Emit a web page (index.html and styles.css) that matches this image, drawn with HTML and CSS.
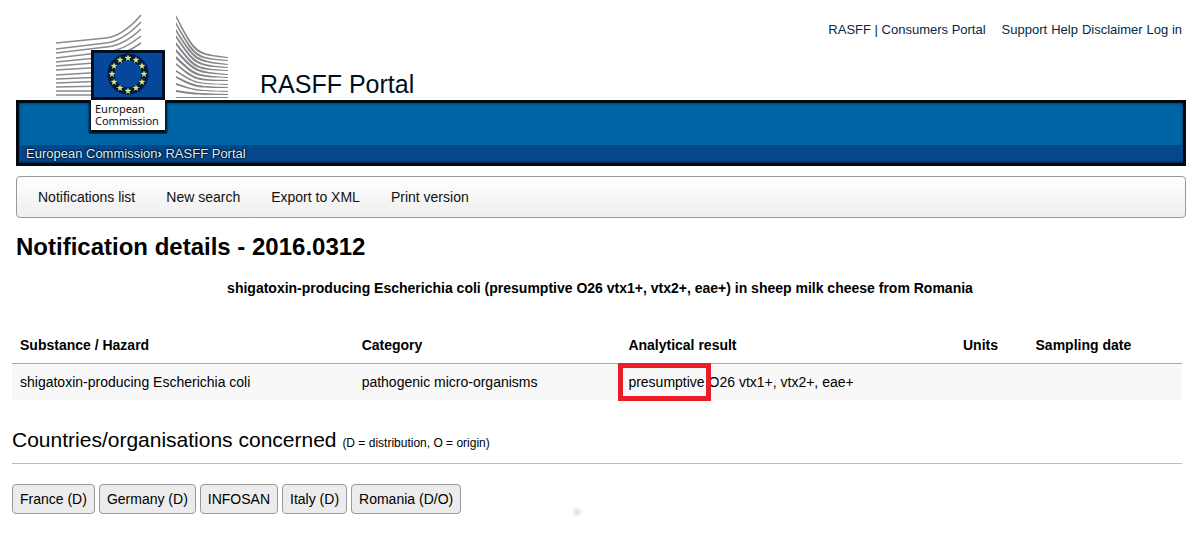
FILE: index.html
```html
<!DOCTYPE html>
<html lang="en">

<head>
  <meta charset="UTF-8">
  <meta name="viewport" content="width=device-width, initial-scale=1.0">
  <title>RASFF Portal</title>
  <link rel="stylesheet" href="styles.css">
</head>

<body>
  <header class="header">
    <div class="top">
      <div class="site-name">RASFF Portal</div>
      <div class="links">
        <div><a href="#">RASFF</a> | <a href="#">Consumers Portal</a></div>
        <div class="tools">
          <a href="#">Support</a>
          <a href="#">Help</a>
          <a href="#">Disclaimer</a>
          <a href="#">Log in</a>
        </div>
      </div>
    </div>
    <div class="banner">
      <div class="crumbs"><a href="#">European Commission</a><span class="arrow">›</span> <a href="#">RASFF Portal</a></div>
    </div>
    <!-- logo hangs over the banner -->
    <div class="logo">
      <svg class="logo-pic" viewBox="0 0 172 86" width="172" height="86" aria-hidden="true">
        <g fill="none" stroke="#8b8b8f" stroke-width="1.6">
          <path d="M0 29L50 24Q67 22 85 1" />
          <path d="M0 35L50 29Q67 27 85 8" />
          <path d="M0 39L50 33Q67 32 85 15" />
          <path d="M0 44L50 38Q67 37 85 22" />
          <path d="M0 48L50 43Q67 42 85 29" />
          <path d="M0 52L50 48" />
          <path d="M0 56L50 53" />
          <path d="M0 61L50 58" />
          <path d="M0 65L50 63" />
          <path d="M0 69L50 67" />
          <path d="M0 73L50 72" />
          <path d="M0 77L50 77" />
          <path d="M0 81L50 81" />
        </g>
        <g fill="#85858a">
          <path d="M120 1C140 39 140 39 172 43V44C139 41 139 41 120 4Z" />
          <path d="M120 8C140 43 140 43 172 46V47C139 45 139 45 120 11Z" />
          <path d="M120 15C140 46 140 46 172 50V51C139 48 139 48 120 18Z" />
          <path d="M120 21C140 50 140 50 172 53V54C139 52 139 52 120 24Z" />
          <path d="M120 28C140 54 140 54 172 56V57C139 56 139 56 120 31Z" />
          <path d="M120 35C140 57 140 57 172 60V61C139 59 139 59 120 38Z" />
          <path d="M120 42C140 61 140 61 172 63V64C139 63 139 63 120 45Z" />
          <path d="M120 49C140 65 140 65 172 66V67C139 67 139 67 120 51Z" />
          <path d="M120 56C140 69 140 69 172 70V71C139 70 139 70 120 58Z" />
          <path d="M120 62C140 72 140 72 172 73V74C139 74 139 74 120 64Z" />
          <path d="M120 69C140 76 140 76 172 77V78C139 77 139 77 120 71Z" />
          <path d="M120 76C140 79 140 79 172 80V81C139 81 139 81 120 78Z" />
          <path d="M120 83H172V84H120Z" />
        </g>
        <rect x="35" y="36" width="74" height="50" fill="#00101f" />
        <rect x="38" y="39" width="68" height="44" fill="#06479b" />
        <circle cx="72" cy="60" r="17" fill="none" stroke="#041c3c" stroke-width="7" />
        <defs>
          <path id="star" d="M0 -3.6L.9 -1.2L3.5 -1.1L1.4 .5L2.1 3L0 1.5L-2.1 3L-1.4 .5L-3.5 -1.1L-.9 -1.2Z" />
        </defs>
        <g fill="#dbea70">
          <use href="#star" x="72" y="44" />
          <use href="#star" x="80" y="46" />
          <use href="#star" x="86" y="52" />
          <use href="#star" x="88" y="60" />
          <use href="#star" x="86" y="68" />
          <use href="#star" x="80" y="74" />
          <use href="#star" x="72" y="77" />
          <use href="#star" x="64" y="74" />
          <use href="#star" x="58" y="68" />
          <use href="#star" x="56" y="60" />
          <use href="#star" x="58" y="52" />
          <use href="#star" x="64" y="46" />
        </g>
      </svg>
      <div class="logo-name"><div>European</div><div>Commission</div></div>
    </div>
  </header>

  <nav class="menu">
    <a href="#">Notifications list</a>
    <a href="#">New search</a>
    <a href="#">Export to XML</a>
    <a href="#">Print version</a>
  </nav>

  <main class="main">
    <h1>Notification details - 2016.0312</h1>
    <p class="subject">shigatoxin-producing Escherichia coli (presumptive O26 vtx1+, vtx2+, eae+) in sheep milk cheese from Romania</p>

    <table class="results">
      <thead>
        <tr>
          <th class="c-hazard">Substance / Hazard</th>
          <th class="c-cat">Category</th>
          <th class="c-result">Analytical result</th>
          <th class="c-units">Units</th>
          <th>Sampling date</th>
        </tr>
      </thead>
      <tbody>
        <tr>
          <td>shigatoxin-producing Escherichia coli</td>
          <td>pathogenic micro-organisms</td>
          <td><span class="marked">presumptive</span> O26 vtx1+, vtx2+, eae+</td>
          <td></td>
          <td></td>
        </tr>
      </tbody>
    </table>

    <h2>Countries/organisations concerned <small>(D = distribution, O = origin)</small></h2>
    <div class="countries">
      <button type="button">France (D)</button>
      <button type="button">Germany (D)</button>
      <button type="button">INFOSAN</button>
      <button type="button">Italy (D)</button>
      <button type="button">Romania (D/O)</button>
      <span class="dot"></span>
    </div>
  </main>
</body>

</html>
```

FILE: styles.css
```css
body {
  margin: 0;
  background-color: #fff;
  color: #000;
  font-family: "Liberation Sans", Arial, sans-serif;
  font-size: 14px;
  line-height: 16px;
}

a {
  color: inherit;
  text-decoration: none;
}

.header {
  position: relative;
  margin: 0 7px 0 16px;
}

.top {
  display: flex;
  justify-content: space-between;
  align-items: flex-start;
  padding: 22px 4px 0 244px;
}

.site-name {
  padding-top: 46px;
  font-size: 25px;
  line-height: 32px;
  color: #000f1c;
}

.links {
  display: flex;
  gap: 16px;
  font-size: 13px;
  color: #002a4a;
}

.tools {
  display: flex;
  gap: 4px;
}

.banner {
  border: 3px solid #000a14;
  padding-top: 42px;
  background-color: #0065a4;
  box-shadow: inset 0 0 3px #00203c;
}

.crumbs {
  padding: 1px 7px;
  background-color: #06468a;
  box-shadow: inset 0 -2px 2px -1px #00203c;
  color: #d2f3ff;
  font-size: 13px;
  text-shadow: 0 0 2px #000, 0 0 2px #000;
}

.crumbs .arrow {
  font-weight: bold;
}

.logo {
  position: absolute;
  top: 14px;
  left: 40px;
}

.logo-pic {
  display: block;
}

.logo-name {
  width: 70px;
  margin-left: 35px;
  padding: 3px 0 3px 4px;
  background-color: #fff;
  box-shadow: 0 2px 2px 2px #000f1c;
  clip-path: inset(0 -4px -4px -4px);
  color: #111;
  font-family: "Noto Sans", "Open Sans", sans-serif;
  font-size: 11px;
  line-height: 12px;
}

.menu {
  display: flex;
  gap: 31px;
  margin: 10px 7px 0 16px;
  padding: 12px 21px;
  border: 1px solid #999;
  border-radius: 4px;
  background: linear-gradient(#fff, #eee);
  color: #111;
}

.main {
  padding: 0 11px 16px 12px;
}

h1 {
  margin: 14px 0 0 4px;
  font-size: 24px;
  line-height: 30px;
}

.subject {
  margin: 18px 0 41px;
  padding-left: 6px;
  font-weight: bold;
  text-align: center;
}

.results {
  width: 100%;
  border-collapse: collapse;
  table-layout: fixed;
}

.results th,
.results td {
  box-sizing: border-box;
  padding: 10px 8px;
  text-align: left;
}

.results th {
  padding-top: 0;
  border-bottom: 1px solid #aaa;
}

.results td {
  background-color: #f8f8f8;
}

.c-hazard {
  width: 29.2%;
}

.c-cat {
  width: 22.8%;
}

.c-result {
  width: 28.6%;
}

.c-units {
  width: 6.2%;
}

/* red frame round the word */
.marked {
  position: relative;
}

.marked::after {
  content: "";
  position: absolute;
  inset: -11px -6px -11px -10px;
  border: 5px solid #ea1c24;
}

h2 {
  margin: 28px 0 20px;
  padding-bottom: 8px;
  border-bottom: 1px solid #bbb;
  font-size: 21px;
  font-weight: normal;
  line-height: 24px;
}

h2 small {
  font-size: 12px;
}

.countries {
  display: flex;
  gap: 4px;
}

.countries button {
  padding: 6px 7px;
  border: 1px solid #999;
  border-radius: 4px;
  background-color: #ececec;
  color: #000;
  font-family: inherit;
  font-size: 14px;
  line-height: 16px;
}

.dot {
  align-self: flex-end;
  width: 12px;
  height: 12px;
  margin-left: 106px;
  margin-bottom: -4px;
  background: radial-gradient(#ddd, #fff 70%);
}
```
